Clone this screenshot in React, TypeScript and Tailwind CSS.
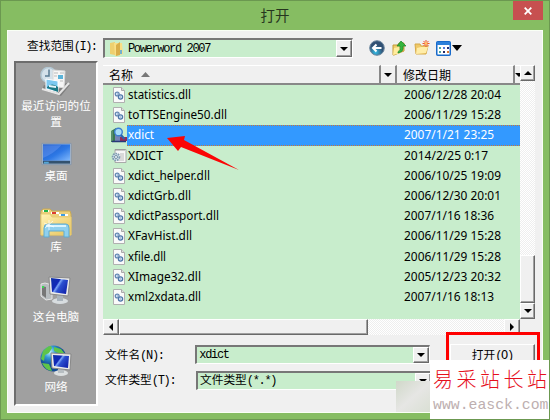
import type { ReactNode } from "react";

const ui = "font-['Noto_Sans_CJK_SC',sans-serif]";
const song = "font-['Liberation_Mono','Noto_Sans_CJK_SC',monospace]";
const raised = "bg-[#f0f0f0] border border-t-white border-l-white border-r-[#696969] border-b-[#696969] shadow-[inset_-1px_-1px_0_#a0a0a0]";
const sunken = "bg-[#c8edcc] border-t-2 border-l-2 border-r border-b border-t-[#777] border-l-[#777] border-r-white border-b-white";
const track = "bg-[repeating-conic-gradient(#ffffff_0_25%,#eeeeee_0_50%)] bg-[length:2px_2px]";

const files = [
  { name: "statistics.dll", date: "2006/12/28 20:04", kind: "dll", w: 63, dw: 97 },
  { name: "toTTSEngine50.dll", date: "2006/11/29 15:28", kind: "dll", w: 99, dw: 97 },
  { name: "xdict", date: "2007/1/21 23:25", kind: "app", w: 26, dw: 90 },
  { name: "XDICT", date: "2014/2/25 0:17", kind: "ini", w: 35, dw: 84 },
  { name: "xdict_helper.dll", date: "2006/10/25 19:09", kind: "dll", w: 82, dw: 97 },
  { name: "xdictGrb.dll", date: "2006/12/30 20:01", kind: "dll", w: 63, dw: 97 },
  { name: "xdictPassport.dll", date: "2007/1/16 18:36", kind: "dll", w: 91, dw: 90 },
  { name: "XFavHist.dll", date: "2006/11/29 15:28", kind: "dll", w: 64, dw: 97 },
  { name: "xfile.dll", date: "2006/11/29 15:28", kind: "dll", w: 38, dw: 97 },
  { name: "XImage32.dll", date: "2005/12/23 20:32", kind: "dll", w: 73, dw: 97 },
  { name: "xml2xdata.dll", date: "2007/1/16 18:13", kind: "dll", w: 73, dw: 90 },
];

function Arrow({ dir = "down" }: { dir?: "down" | "up" | "left" | "right" }) {
  const d = { down: "M0 2h8L4 6z", up: "M0 6h8L4 2z", left: "M6 0v8L2 4z", right: "M2 0v8L6 4z" }[dir];
  return <svg width="8" height="8" viewBox="0 0 8 8" className="shrink-0"><path d={d} /></svg>;
}

function FileIcon({ kind }: { kind: string }) {
  if (kind === "app")
    return (
      <svg width="16" height="16" viewBox="0 0 16 16" className="shrink-0">
        <path d="M0 4l5-3v14H0z" fill="#397852" /><path d="M1 4v10" stroke="#79a68a" /><path d="M4 5h6v10H4z" fill="#7583b4" />
        <path d="M9 10h7v4H9z" fill="#932d57" /><path d="M1 14.500h14" stroke="#273878" strokeWidth="1.5" />
        <circle cx="7.5" cy="5" r="3.8" fill="#a5dcf8" stroke="#3b7fd0" strokeWidth="1.4" />
        <path d="M10 8l3.500 4" stroke="#2864b2" strokeWidth="2" />
      </svg>
    );
  if (kind === "ini")
    return (
      <svg width="16" height="16" viewBox="0 0 16 16" className="shrink-0">
        <path d="M4 1.5h11v13H4z" fill="#f7f7f7" stroke="#a9a9a9" />
        <path d="M5 1v2M7 1v2M9 1v2M11 1v2M13 1v2" stroke="#888" strokeWidth=".8" /><path d="M9 6h4M9 8h4M9 10h4M8 12h5" stroke="#bbb" />
        <circle cx="5" cy="9" r="3.4" fill="#d7e6ef" stroke="#7f9bb0" strokeWidth="1.8" strokeDasharray="1.7 .8" />
        <circle cx="5" cy="9" r="1.5" fill="#fff" stroke="#7190a5" />
      </svg>
    );
  return (
    <svg width="16" height="16" viewBox="0 0 16 16" className="shrink-0">
      <path d="M2.5.5h8l3 3v12h-11z" fill="#fafafa" stroke="#b0b0b0" /><path d="M10.5.5v3h3" fill="#ddd" stroke="#aaa" />
      <circle cx="6.200" cy="7" r="1.900" fill="#dceafa" stroke="#6488b4" strokeWidth="1.300" />
      <circle cx="9.500" cy="10" r="2.100" fill="#dceafa" stroke="#4d76a8" strokeWidth="1.300" />
      <path d="M6 7h.6M9.200 10h.6" stroke="#416b9d" />
    </svg>
  );
}

function Defs() {
  return (
    <svg width="0" height="0" className="absolute">
      <defs>
        <linearGradient id="screen" x1="0" y1="0" x2="1" y2=".6"><stop stopColor="#1031a8" /><stop offset=".42" stopColor="#1027b8" /><stop offset=".5" stopColor="#7ba4f7" /><stop offset=".62" stopColor="#2c50d0" /><stop offset="1" stopColor="#1528b0" /></linearGradient>
        <linearGradient id="desk" x1="0" y1="0" x2="1" y2="1"><stop stopColor="#1b55c2" /><stop offset=".55" stopColor="#2d78e5" /><stop offset="1" stopColor="#83bafc" /></linearGradient>
        <linearGradient id="folder" x1="0" y1="0" x2="1" y2="1"><stop stopColor="#fff3b6" /><stop offset="1" stopColor="#e9c45c" /></linearGradient>
        <radialGradient id="globe" cx=".35" cy=".25"><stop stopColor="#c3f4ff" /><stop offset=".45" stopColor="#349ad5" /><stop offset="1" stopColor="#124b94" /></radialGradient>
        <radialGradient id="back" cx=".4" cy=".8"><stop stopColor="#35bbe5" /><stop offset="1" stopColor="#315174" /></radialGradient>
      </defs>
    </svg>
  );
}

function Recent() {
  return (
    <svg width="32" height="32" viewBox="0 0 32 32">
      <path d="M2 23l19 6 9-11-4-2-7 6-15-4z" fill="#808080" /><path d="M2 22l17 5 10-11" fill="none" stroke="#e4e4e4" strokeWidth="2" />
      <circle cx="8.500" cy="8" r="7.500" fill="#d4e1ea" stroke="#b3c8d4" strokeWidth="1.500" /><path d="M9 2.500V9h-4" fill="none" stroke="#587b92" strokeWidth="1.5" />
      <path d="M13 3l12 1-1 17-11-2z" fill="#f6f6f6" stroke="#d8d8d8" /><path d="M14 6h4M14 9h3M20 6h4M20 14h3" stroke="#bbb" /><path d="M18 8h5v4h-5z" fill="#5bb3d8" />
      <path d="M6 12l12 2v11L6 22z" fill="#7cc8f0" stroke="#fff" /><path d="M7 20q5-5 11 0v5L7 21z" fill="#1c7985" /><path d="M9 18l7 1v2l-7-1z" fill="#e8f6fb" />
    </svg>
  );
}
function Desktop() {
  return (
    <svg width="31" height="24" viewBox="0 0 32 24">
      <path d="M1 1h30v22H1z" fill="#bacbdc" stroke="#8496aa" /><path d="M2 2h28v17H2z" fill="url(#desk)" />
      <path d="M2 3h19Q13 12 2 16z" fill="#6d9cf4" opacity=".45" /><path d="M2 19h28v3H2z" fill="#34526e" /><path d="M3 20h5v2H3z" fill="#57a6d5" />
    </svg>
  );
}
function Library() {
  return (
    <svg width="32" height="30" viewBox="0 0 32 30">
      <path d="M1 3l2-2h7l2 2h18l1 3v21H1z" fill="#ecd07c" stroke="#c9aa55" /><path d="M3 2h6v2H3z" fill="#fff" /><path d="M4 2h4v2H4z" fill="#20b34a" /><path d="M11 4h8v2h-8z" fill="#fff" /><path d="M12 4h4v2h-4z" fill="#dd3d30" /><path d="M19 6h9v2h-9z" fill="#fff" /><path d="M21 6h4v2h-4z" fill="#3f9de1" />
      <path d="M1 6h9l2 3h19v18H1z" fill="url(#folder)" stroke="#e8cd76" />
      <path d="M4 29v-9q0-4 4-4h18q3 0 3 4v9h-5v-6H9v6z" fill="#8fd0ee" stroke="#5fabd0" /><path d="M6 18h20" stroke="#d9f4ff" strokeWidth="2" />
      <path d="M4 15l10 4M9 12v10M5 20l8-7" stroke="#fff" strokeWidth=".7" />
    </svg>
  );
}
function Computer() {
  return (
    <svg width="32" height="32" viewBox="0 0 32 32">
      <path d="M1 8l4-1 7 2v14l-6 1-5-4z" fill="#b8bdc0" stroke="#e5e5e5" /><path d="M2 10l4 1v11l-4-3z" fill="#777" /><path d="M2 10h2v2H2z" fill="#37da52" />
      <ellipse cx="20" cy="25" rx="8" ry="3" fill="#d8dde0" /><path d="M17 18h6v7h-6z" fill="#aab4bc" />
      <path d="M9 1l21 1-2 18-18-2z" fill="#ececea" stroke="#8a8a8a" /><path d="M11 2l17 2-2 14-14-2z" fill="url(#screen)" />
    </svg>
  );
}
function Network() {
  return (
    <svg width="32" height="32" viewBox="0 0 32 32">
      <circle cx="13.5" cy="13.5" r="13" fill="url(#globe)" /><path d="M3 6q8-8 9-3l-3 5-4 2-1 6-3-2zM14 2l7 2 4 5-7-1-4-2zM2 18l7 1 3 7q-7-1-10-8z" fill="#5fc449" />
      <ellipse cx="21" cy="28" rx="7" ry="3" fill="#dce0e1" /><path d="M18 23h6v5h-6z" fill="#b7bec2" /><path d="M11 8l20 1-1 16-18-2z" fill="#ececea" stroke="#888" /><path d="M13 10l16 1-1 12-14-2z" fill="url(#screen)" />
    </svg>
  );
}

function Place({ children, label, className, gap }: { children: ReactNode; label: string; className: string; gap: string }) {
  return (
    <div className={`flex w-full flex-col items-center ${className}`}>
      {children}
      <span className={`${ui} ${gap} w-[74px] text-center text-[11.600px] leading-[16px] text-white`}>{label}</span>
    </div>
  );
}

function Fit({ text, width, size = 12 }: { text: string; width: number; size?: number }) {
  return (
    <svg width={width} height="18" className="block shrink-0 overflow-visible">
      <text x="0" y="13" textLength={width} lengthAdjust="spacingAndGlyphs" fontSize={size} fill="currentColor" className="font-['Noto_Sans',sans-serif]">{text}</text>
    </svg>
  );
}

function DropButton() {
  return <div className={`${raised} flex h-full w-[16px] shrink-0 items-center justify-center`}><Arrow /></div>;
}

export default function App() {
  return (
    <div className="relative flex h-[420px] w-[550px] flex-col overflow-hidden border border-[#6b9850] bg-[#86bd62] text-black">
      <Defs />
      <header className="flex h-[29px] shrink-0">
        <h1 className={`${ui} ml-[36px] flex-1 text-center text-[14.5px] leading-[27px] text-[#26351f]`}>打开</h1>
        <button className="mr-[6px] flex h-[19px] w-[30px] items-center justify-center bg-[#c75050]">
          <svg width="8" height="8" viewBox="0 0 8 8"><path d="M.7.7l6.6 6.6M7.3.7L.7 7.3" stroke="white" strokeWidth="1.8" /></svg>
        </button>
      </header>

      <main className="ml-[6px] flex h-[383px] w-[536px] shrink-0 flex-col border border-[#f9fff5] bg-[#f0f0f0]">
        <div className="flex h-[30px] shrink-0 items-end pb-[3px]">
          <label className={`${song} ml-[19px] w-[76px] text-[11.7px] leading-[22px] whitespace-nowrap`}>查找范围<span className="text-[12px] tracking-[-1.500px]">(I):</span></label>
          <div className={`${sunken} flex h-[20px] w-[250px] items-center`}>
            <svg width="16" height="16" viewBox="0 0 16 16" className="mr-[3px] ml-[4px]"><path d="M1 2l5-1v13l-5-1z" fill="#eed06e" /><path d="M5 2h8l1 11-8 2z" fill="#f9df86" /><path d="M7 4l4-3v13l-4 1z" fill="#d9ae49" /><path d="M11 9h2v4h-2z" fill="#73afce" /></svg>
            <span className={`${song} flex-1 text-[12px] tracking-[-1.340px] whitespace-nowrap`}>Powerword 2007</span>
            <DropButton />
          </div>
          <div className="ml-[16px] flex h-[20px] items-center">
            <svg width="16" height="16" viewBox="0 0 16 16"><circle cx="8" cy="8" r="7.3" fill="url(#back)" stroke="#6c879e" /><path d="M12.5 8H4M7.5 4.5L4 8l3.5 3.5" stroke="white" strokeWidth="2" fill="none" /></svg>
            <svg width="16" height="16" viewBox="0 0 16 16" className="ml-[6px]"><path d="M2 5h5l1-2h5v8l-10 4H2z" fill="#efcd6b" stroke="#c59b38" /><path d="M3 8l9-2-2 7-8 2z" fill="#ffec9d" /><path d="M7 12q3-2 2-6H6l4-5 5 5h-3q1 6-5 7z" fill="#35b53d" stroke="#168429" strokeWidth=".7" /></svg>
            <svg width="16" height="16" viewBox="0 0 16 16" className="ml-[7px]"><path d="M1 4h5l1 2h7l-2 8H2z" fill="#efc968" stroke="#d6a947" /><path d="M3 8l4-1h7l-2 6-10 1z" fill="#ffeda8" /><path d="M12 0v7M8.5 3.5h7M9.5 1l5 5M14.5 1l-5 5" stroke="#ef5028" /><circle cx="12" cy="3.5" r="1.4" fill="#ffc064" /></svg>
            <svg width="15" height="15" viewBox="0 0 15 15" className="ml-[6px]"><rect x=".75" y=".75" width="13.5" height="13.5" rx="1" fill="#fff" stroke="#176acb" strokeWidth="1.5" /><path d="M1 1h13v3H1z" fill="#2c80da" /><path d="M3 6h2v2H3zM3 10h2v2H3z" fill="#4aa7a0" /><path d="M7 6h2v2H7z" fill="#547bdc" /><path d="M7 10h2v2H7z" fill="#242a66" /><path d="M11 6h2v2h-2z" fill="#262e75" /><path d="M11 10h2v2h-2z" fill="#d97732" /></svg>
            <svg width="10" height="6" viewBox="0 0 10 6" className="ml-[1px]"><path d="M0 0h10L5 6z" /></svg>
          </div>
        </div>

        <div className="flex h-[351px] shrink-0">
          <aside className="ml-[6px] h-[345px] w-[84px] shrink-0 border-2 border-t-[#6d6d6d] border-r-white border-b-white border-l-[#6d6d6d] bg-[#a0a0a0]">
            <Place label="最近访问的位置" className="mt-[4px]" gap="-mt-[2px]"><Recent /></Place>
            <Place label="桌面" className="mt-[13px]" gap="mt-px"><Desktop /></Place>
            <Place label="库" className="mt-[25px]" gap="mt-0"><Library /></Place>
            <Place label="这台电脑" className="mt-[22px]" gap="mt-0"><Computer /></Place>
            <Place label="网络" className="mt-[21px]" gap="mt-px"><Network /></Place>
          </aside>

          <section className="ml-[5px] w-[432px] shrink-0">
            <div className="flex h-[255px] pt-[4px]">
              <div className="w-[417px]">
                <div className={`${ui} flex h-[20px] border-b-2 border-[#888] bg-[#f0f0f0] text-[12px] leading-[18px]`}>
                  <div className="flex w-[278px] items-center border-t border-r-2 border-t-white border-r-[#888] pl-[6px]">名称<svg width="9" height="5" viewBox="0 0 9 5" className="ml-[8px]"><path d="M0 5h9L4.500 0z" fill="#777" /></svg></div>
                  <div className="flex w-[16px] items-center justify-center border-t border-r-2 border-t-white border-r-[#888]"><Arrow /></div>
                  <div className="flex w-[118px] items-center border-t border-r-2 border-t-white border-r-[#888] pl-[6px]">修改日期</div>
                  <div className="flex flex-1 items-center overflow-hidden border-t border-white"><Arrow /></div>
                </div>
                <div className="h-[234px] bg-[#c8edcc]">
                  {files.map((f, i) => (
                    <div key={i} className="flex h-[20.2px] items-center">
                      <div className="flex w-[24px] justify-center pl-[7px]"><FileIcon kind={f.kind} /></div>
                      <div className={`flex h-full flex-1 items-center border-y border-dotted pl-px ${f.kind === "app" ? "border-[#c77938] bg-[#3399ff] text-white" : "border-transparent"}`}>
                        <div className="w-[276px]"><Fit text={f.name} width={f.w} size={12.3} /></div>
                        <Fit text={f.date} width={f.dw} size={12} />
                      </div>
                    </div>
                  ))}
                </div>
              </div>
              <div className={`${track} flex h-[254px] w-[16px] flex-col`}>
                <div className={`${raised} flex h-[16px] items-center justify-center`}><Arrow dir="up" /></div>
                <div className="flex-1" />
                <div className={`${raised} h-[48px]`} />
                <div className={`${raised} flex h-[16px] items-center justify-center`}><Arrow /></div>
              </div>
            </div>

            <div className={`${track} mt-[3px] flex h-[16px] w-[417px]`}>
              <div className={`${raised} flex w-[16px] items-center justify-center`}><Arrow dir="left" /></div>
              <div className={`${raised} w-[249px]`} />
              <div className="flex-1" />
              <div className={`${raised} flex w-[16px] items-center justify-center`}><Arrow dir="right" /></div>
            </div>

            <div className="mt-[10px] flex h-[19px] items-center">
              <label className={`${song} w-[93px] pt-[3px] pl-[2px] text-[11.7px] whitespace-nowrap`}>文件名<span className="text-[12px] tracking-[-1.300px]">(N):</span></label>
              <div className={`${sunken} ${song} flex h-[19px] w-[236px] items-center justify-between pl-[2px] text-[12px] tracking-[-1.340px]`}><span>xdict</span><DropButton /></div>
              <button className={`${raised} ${ui} ml-[20px] h-[21px] w-[86px] text-[11.7px] leading-[18px]`}>打开<span className={`${song} text-[12px] tracking-[-1.300px]`}>(O)</span></button>
            </div>
            <div className="mt-[7px] flex h-[19px] items-center">
              <label className={`${song} w-[93px] pt-px pl-[2px] text-[11.7px] whitespace-nowrap`}>文件类型<span className="text-[12px] tracking-[-1.300px]">(T):</span></label>
              <div className={`${sunken} ${song} flex h-[19px] w-[236px] items-center justify-between pl-[2px] text-[11.7px]`}><span>文件类型<span className="text-[12px] tracking-[-1.300px]">(*.*)</span></span><DropButton /></div>
            </div>
          </section>
        </div>
      </main>

      <svg width="74" height="36" viewBox="0 0 74 36" className="absolute top-[134px] left-[165px]"><path d="M1 3L19 1l-1 4 55 30L15 12l-3 4z" fill="#fb0505" /></svg>
      <div className="absolute top-[331px] left-[445px] h-[40px] w-[94px] border-[3px] border-[#ff0000]" />
      <div className="absolute top-[380px] left-[395px] h-[31px] w-[35px] bg-linear-to-br from-[#d0d8c9] via-[#e6e6e4] to-[#d9dfd3]" />
      <div className="absolute -right-px -bottom-px flex h-[60px] w-[120px] flex-col bg-white pl-[3px]">
        <span className={`${ui} mt-[4px] h-[30px] text-[20px] leading-[30px] font-light tracking-[3.500px] whitespace-nowrap text-[#e6101d]`}>易采站长站</span>
        <span className="mt-px h-[20px] font-['Liberation_Mono',monospace] text-[14.800px] leading-[20px] whitespace-nowrap text-[#bdafb0]">www.easck.com</span>
      </div>
    </div>
  );
}
